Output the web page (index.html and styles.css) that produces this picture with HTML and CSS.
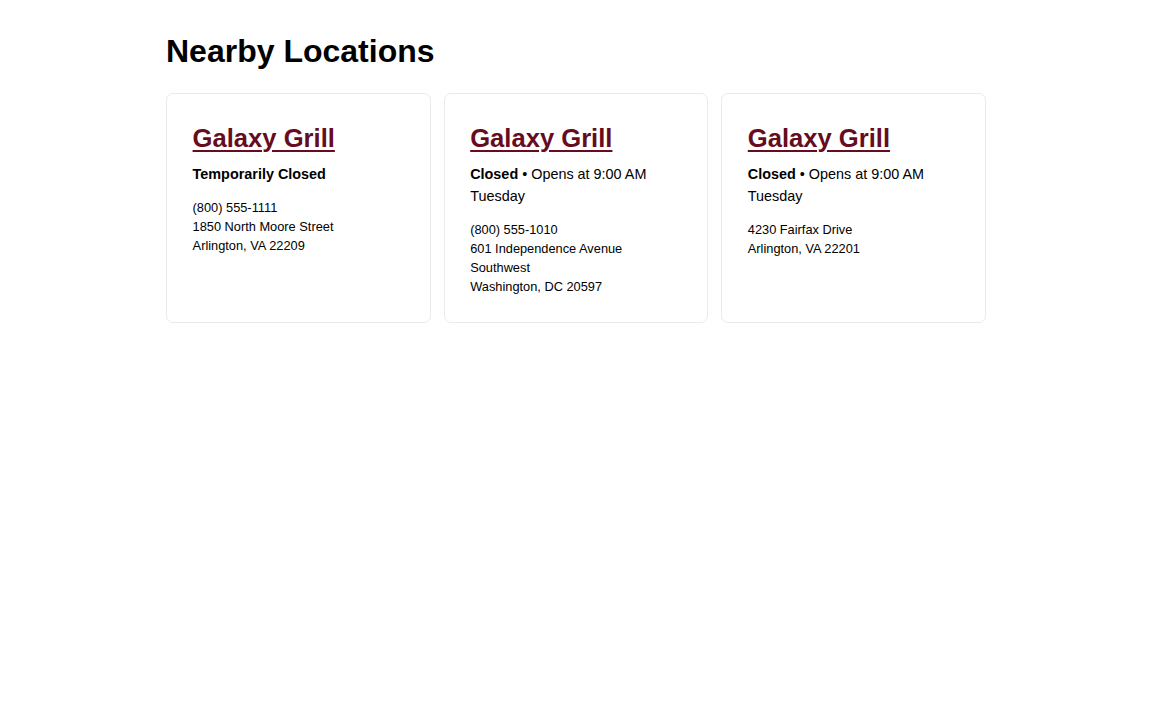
FILE: index.html
```html
<!DOCTYPE html>
<html lang="en">
<head>
<meta charset="utf-8">
<title>Nearby Locations</title>
<link rel="stylesheet" href="styles.css">
</head>
<body>
<main class="page">
  <h1 class="page-title">Nearby Locations</h1>
  <div class="cards">
    <article class="card">
      <h2 class="card-title"><a href="#">Galaxy Grill</a></h2>
      <p class="status"><strong>Temporarily Closed</strong></p>
      <p class="details">(800) 555-1111<br>1850 North Moore Street<br>Arlington, VA 22209</p>
    </article>
    <article class="card">
      <h2 class="card-title"><a href="#">Galaxy Grill</a></h2>
      <p class="status"><strong>Closed</strong> • Opens at 9:00 AM Tuesday</p>
      <p class="details">(800) 555-1010<br>601 Independence Avenue Southwest<br>Washington, DC 20597</p>
    </article>
    <article class="card">
      <h2 class="card-title"><a href="#">Galaxy Grill</a></h2>
      <p class="status"><strong>Closed</strong> • Opens at 9:00 AM Tuesday</p>
      <p class="details">4230 Fairfax Drive<br>Arlington, VA 22201</p>
    </article>
  </div>
</main>
</body>
</html>
```

FILE: styles.css
```css
html, body {
  margin: 0;
  padding: 0;
  background: #ffffff;
}

body {
  font-family: "Liberation Sans", Arial, sans-serif;
  color: #000000;
}

.page {
  width: 820px;
  margin: 0 auto;
  padding-top: 33px;
}

.page-title {
  margin: 0 0 23px 0;
  font-size: 32px;
  font-weight: 700;
  line-height: normal;
}

.cards {
  display: grid;
  grid-template-columns: repeat(3, 1fr);
  gap: 12.8px;
}

.card {
  border: 1px solid #ebebeb;
  border-radius: 7px;
  padding: 30px 25.6px 26px 25.6px;
}

.card-title {
  margin: 0;
  font-size: 25.6px;
  font-weight: 700;
  line-height: normal;
}

.card-title a {
  color: #660c1e;
  text-decoration: underline;
  text-decoration-thickness: 1.5px;
  text-underline-offset: 3px;
}

.status {
  margin: 11px 0 0 0;
  font-size: 14.4px;
  line-height: 1.5;
}

.details {
  margin: 12.5px 0 0 0;
  font-size: 12.8px;
  line-height: 1.5;
}
```
